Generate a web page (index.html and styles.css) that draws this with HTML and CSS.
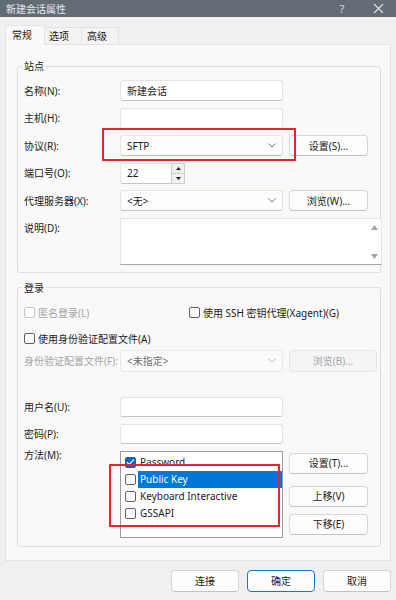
FILE: index.html
```html
<!DOCTYPE html>
<html lang="zh-CN">
<head>
<meta charset="utf-8">
<title>新建会话属性</title>
<link rel="stylesheet" href="styles.css">
</head>
<body>
<div class="titlebar">
  <span class="title">新建会话属性</span>
  <span class="tb-btn">?</span>
  <span class="tb-btn tb-close">
    <svg width="11" height="11" viewBox="0 0 11 11"><path d="M1 1 L10 10 M10 1 L1 10" stroke="#dfe2e6" stroke-width="1.1" fill="none"/></svg>
  </span>
</div>

<div class="tabs">
  <div class="tab active">常规</div>
  <div class="tab tab2">选项</div>
  <div class="tab tab3">高级</div>
</div>

<div class="panel">
  <fieldset class="group">
    <legend>站点</legend>
    <div class="grid">
      <div class="lbl">名称(N):</div>
      <div class="field">新建会话</div>
      <div></div>

      <div class="lbl">主机(H):</div>
      <div class="field"></div>
      <div></div>

      <div class="lbl">协议(R):</div>
      <div class="field select">SFTP<svg class="chev" width="8" height="5" viewBox="0 0 8 5"><path d="M0.5 0.5 L4 4 L7.5 0.5" stroke="#7a7a7a" stroke-width="1" fill="none"/></svg></div>
      <div class="btn gbtn">设置(S)...</div>

      <div class="lbl">端口号(O):</div>
      <div class="field port">22
        <span class="spin">
          <span class="spin-half"><svg width="5" height="3" viewBox="0 0 5 3"><path d="M0 3 L2.5 0 L5 3 Z" fill="#222"/></svg></span>
          <span class="spin-half spin-down"><svg width="5" height="3" viewBox="0 0 5 3"><path d="M0 0 L2.5 3 L5 0 Z" fill="#222"/></svg></span>
        </span>
      </div>
      <div></div>

      <div class="lbl">代理服务器(X):</div>
      <div class="field select">&lt;无&gt;<svg class="chev" width="8" height="5" viewBox="0 0 8 5"><path d="M0.5 0.5 L4 4 L7.5 0.5" stroke="#7a7a7a" stroke-width="1" fill="none"/></svg></div>
      <div class="btn gbtn">浏览(W)...</div>

      <div class="lbl lbl-top">说明(D):</div>
      <div class="textarea">
        <span class="sb">
          <svg width="7" height="5" viewBox="0 0 7 5"><path d="M0 5 L3.5 0 L7 5 Z" fill="#a3a3a3"/></svg>
          <svg width="7" height="5" viewBox="0 0 7 5"><path d="M0 0 L3.5 5 L7 0 Z" fill="#a3a3a3"/></svg>
        </span>
      </div>
    </div>
  </fieldset>

  <fieldset class="group group2">
    <legend>登录</legend>
    <div class="cbrow">
      <label class="cb disabled cb-first"><span class="box"></span>匿名登录(L)</label>
      <label class="cb"><span class="box"></span>使用 SSH 密钥代理(Xagent)(G)</label>
    </div>
    <div class="cbrow cbrow2">
      <label class="cb"><span class="box"></span>使用身份验证配置文件(A)</label>
    </div>
    <div class="row row-profile">
      <div class="lbl disabled-text">身份验证配置文件(F):</div>
      <div class="field select dis-select">&lt;未指定&gt;<svg class="chev" width="8" height="5" viewBox="0 0 8 5"><path d="M0.5 0.5 L4 4 L7.5 0.5" stroke="#b5b5b5" stroke-width="1" fill="none"/></svg></div>
      <div class="btn btn-dis btn-wide">浏览(B)...</div>
    </div>
    <div class="row row-user">
      <div class="lbl">用户名(U):</div>
      <div class="field"></div>
    </div>
    <div class="row row-pass">
      <div class="lbl">密码(P):</div>
      <div class="field"></div>
    </div>
    <div class="row row-method">
      <div class="lbl lbl-method">方法(M):</div>
      <div class="list">
        <div class="item"><span class="box checked"><svg width="9" height="8" viewBox="0 0 9 8"><path d="M1 4.2 L3.4 6.5 L8 1.3" stroke="#fff" stroke-width="1.2" fill="none"/></svg></span><span class="itext">Password</span></div>
        <div class="item"><span class="box"></span><span class="itext sel">Public Key</span></div>
        <div class="item"><span class="box"></span><span class="itext">Keyboard Interactive</span></div>
        <div class="item"><span class="box"></span><span class="itext">GSSAPI</span></div>
      </div>
      <div class="mbtns">
        <div class="btn">设置(T)...</div>
        <div class="btn mb2">上移(V)</div>
        <div class="btn mb3">下移(E)</div>
      </div>
    </div>
  </fieldset>
</div>

<div class="footer">
  <div class="btn fbtn">连接</div>
  <div class="btn fbtn focus">确定</div>
  <div class="btn fbtn">取消</div>
</div>

<div class="mark mark1"></div>
<div class="mark mark2"></div>
</body>
</html>
```

FILE: styles.css
```css
* { box-sizing: border-box; }
html, body { margin: 0; padding: 0; }
body {
  position: relative;
  width: 396px;
  height: 600px;
  overflow: hidden;
  background: #f0f0f0;
  font-family: "Noto Sans", "Noto Sans CJK SC", sans-serif;
  font-size: 10px;
  line-height: 14px;
  color: #1b1b1b;
}

.titlebar {
  height: 17px;
  background: #636b74;
  color: #e6e9ec;
  display: flex;
  align-items: center;
  padding-left: 6px;
}
.title { flex: 1; font-size: 10px; }
.tb-btn {
  width: 36px;
  height: 17px;
  display: flex;
  align-items: center;
  justify-content: center;
  font-size: 11px;
  color: #dfe2e6;
}

.tabs {
  display: flex;
  margin-top: 8px;
  padding-left: 5px;
  height: 19px;
  position: relative;
  z-index: 1;
}
.tab {
  height: 17px;
  margin-top: 2px;
  padding-left: 4px;
  border: 1px solid #e2e2e2;
  border-bottom: none;
  background: #f3f3f3;
  line-height: 16px;
}
.tab.active {
  width: 40px;
  height: 20px;
  margin-top: 0;
  padding-left: 6px;
  background: #f9f9f9;
  line-height: 19px;
}
.tab2 { width: 37px; border-left: none; }
.tab3 { width: 37px; border-left: none; padding-left: 5px; }

.panel {
  margin-left: 5px;
  width: 386px;
  background: #f9f9f9;
  border: 1px solid #e3e3e3;
  padding: 14px 0 13px 11px;
}

.group {
  margin: 0;
  width: 364px;
  border: 1px solid #dedede;
  border-radius: 3px;
  padding: 7px 0 7px 6px;
  min-width: 0;
}
.group legend {
  margin-left: -2px;
  padding: 0 2px;
  line-height: 14px;
  font-size: 10px;
}
.group2 { margin-top: 8px; padding-top: 8px; padding-bottom: 8px; }

.grid {
  display: grid;
  grid-template-columns: 96px 163px 85px;
  grid-template-rows: repeat(5, 21px) 47px;
  row-gap: 6.5px;
}
.gbtn { margin-left: 6px; }
.lbl { align-self: center; white-space: nowrap; }
.lbl-top { align-self: start; margin-top: 3px; }

.field {
  position: relative;
  height: 21px;
  background: #fff;
  border: 1px solid #e4e4e4;
  border-bottom-color: #c4c4c4;
  border-radius: 3px;
  padding-left: 6px;
  display: flex;
  align-items: center;
}
.select { background: #fdfdfd; justify-content: space-between; padding-right: 6px; }
.chev { flex: none; }
.port { width: 65px; }
.spin {
  position: absolute;
  right: -1px;
  top: -1px;
  width: 14px;
  height: 21px;
  border: 1px solid #cfcfcf;
  background: #f0f0f0;
  display: flex;
  flex-direction: column;
}
.spin-half { flex: 1; display: flex; align-items: center; justify-content: center; }
.spin-down { border-top: 1px solid #cfcfcf; }

.textarea {
  grid-column: 2 / 4;
  width: 262px;
  height: 47px;
  background: #fff;
  border: 1px solid #e4e4e4;
  border-bottom-color: #a8a8a8;
  display: flex;
  justify-content: flex-end;
}
.sb {
  width: 14px;
  display: flex;
  flex-direction: column;
  justify-content: space-between;
  align-items: center;
  padding: 6px 0 5px;
}

.btn {
  height: 21px;
  background: #fdfdfd;
  border: 1px solid #d6d6d6;
  border-bottom-color: #c2c2c2;
  border-radius: 4px;
  display: flex;
  align-items: center;
  justify-content: center;
}
.btn-dis { background: #f5f5f5; border-color: #e5e5e5; color: #a6a6a6; }
.btn-wide { width: 88px; }

.cbrow { display: flex; height: 20px; align-items: center; }
.cbrow2 { margin-top: 6px; }
.cb { display: flex; align-items: center; white-space: nowrap; }
.cb-first { width: 165px; }
.box {
  width: 11px;
  height: 11px;
  border: 1px solid #5f5f5f;
  border-radius: 2px;
  background: #fff;
  margin-right: 3px;
  flex: none;
  display: flex;
  align-items: center;
  justify-content: center;
}
.cb.disabled { color: #a5a5a5; }
.cb.disabled .box { border-color: #c6c6c6; }
.disabled-text { color: #a5a5a5; }

.row { display: flex; align-items: center; }
.row .lbl { width: 96px; flex: none; }
.row .field { width: 163px; flex: none; }
.row .btn { margin-left: 6px; }
.row-profile { margin-top: 1px; height: 22px; }
.row-profile .field, .row-profile .btn { height: 22px; }
.dis-select { background: #fbfbfb; border-color: #e8e8e8; color: #6a6a6a; }
.row-user { margin-top: 25px; }
.row-user .field, .row-pass .field { height: 20px; }
.row-pass { margin-top: 7px; }
.row-method { margin-top: 7px; align-items: flex-start; }
.row .lbl-method { align-self: flex-start; margin-top: -3px; }

.list {
  width: 163px;
  height: 87px;
  flex: none;
  background: #fff;
  border: 1px solid #9c9c9c;
  padding: 2px 0 0 4px;
}
.item { height: 17px; display: flex; align-items: center; }
.item .box { margin-right: 2px; }
.box.checked { background: #1565c0; border-color: #1565c0; }
.itext { height: 17px; line-height: 17px; padding-left: 2px; flex: 1; }
.itext.sel { background: #0078d7; color: #fff; }

.mbtns { display: flex; flex-direction: column; margin-left: 6px; padding-top: 2px; }
.mbtns .btn { width: 79px; margin-left: 0; }
.mb2 { margin-top: 12px; }
.mb3 { margin-top: 7px; }

.footer {
  display: flex;
  justify-content: flex-end;
  gap: 8px;
  margin-top: 9px;
  padding-right: 5px;
}
.fbtn { width: 68px; height: 22px; }
.focus { border: 1px solid #1f72c8; }

.mark {
  position: absolute;
  border: 2px solid #e4252d;
  pointer-events: none;
}
.mark1 { left: 102px; top: 128px; width: 194px; height: 33px; }
.mark2 { left: 109px; top: 464px; width: 171px; height: 63px; }
```
